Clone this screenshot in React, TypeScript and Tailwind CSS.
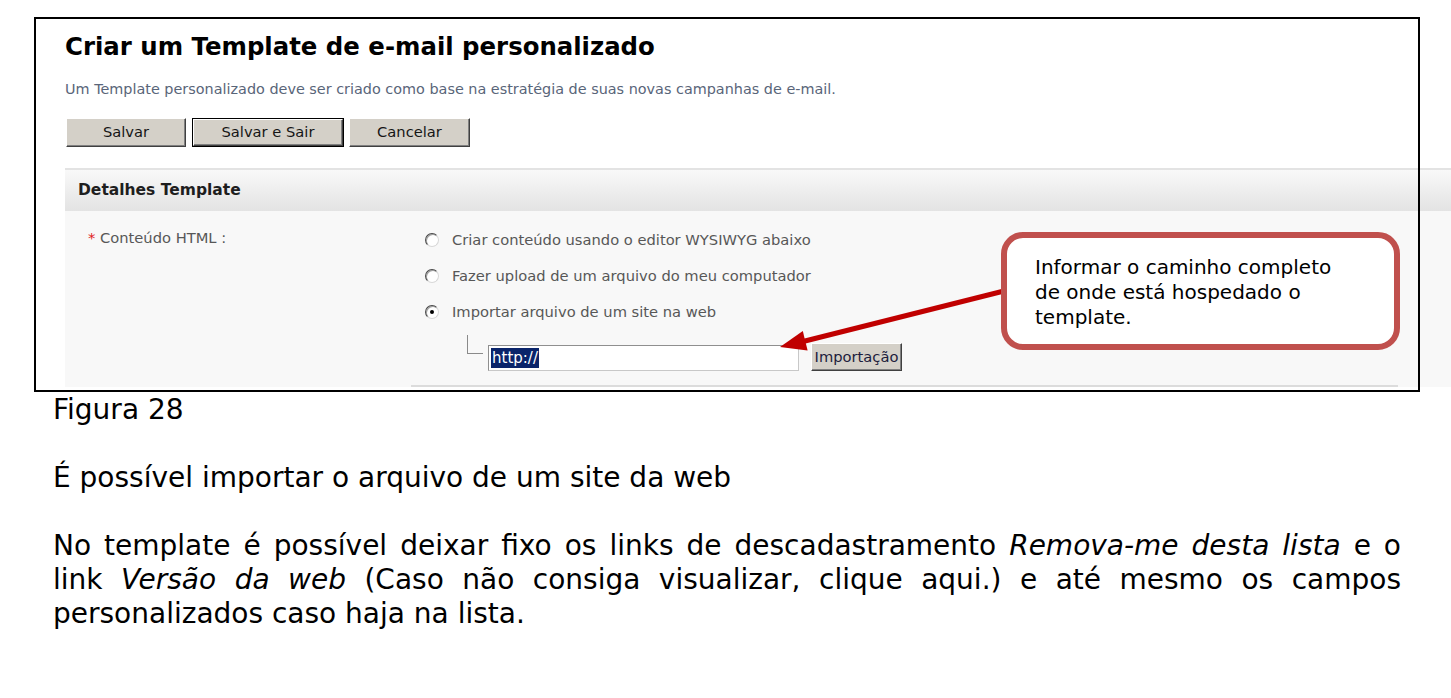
import React from "react";

function WinButton({
  children,
  className = "",
  focused = false,
}: {
  children: React.ReactNode;
  className?: string;
  focused?: boolean;
}) {
  const inner = (
    <div className="flex h-full w-full items-center justify-center border border-t-white border-l-white border-r-[#404040] border-b-[#404040] bg-[#d4d0c8] text-[#161616] shadow-[inset_-1px_-1px_0_#808080]">
      {children}
    </div>
  );
  if (focused) {
    return <div className={`border border-black ${className}`}>{inner}</div>;
  }
  return <div className={className}>{inner}</div>;
}

function Radio({ checked = false, label }: { checked?: boolean; label: string }) {
  return (
    <div className="flex h-[20px] items-center gap-[13px]">
      <span className="relative block h-[14px] w-[14px] rounded-full border-[1.5px] border-t-[#4a4a4a] border-l-[#4a4a4a] border-r-[#d8d8d8] border-b-[#d8d8d8] bg-white shadow-[inset_1px_1px_0_#a0a0a0]">
        {checked && (
          <span className="absolute left-[3.5px] top-[3.5px] block h-[4px] w-[4px] rounded-full bg-black" />
        )}
      </span>
      <span className="whitespace-nowrap text-[14.7px] leading-[20px] text-[#575757]">{label}</span>
    </div>
  );
}

export default function App() {
  return (
    <div className="relative h-[698px] w-[1451px] overflow-hidden bg-white font-['DejaVu_Sans','Verdana',sans-serif] text-black">
      {/* Figure */}
      <div className="relative ml-[34px] mt-[17px] h-[375px] w-[1417px]">
        <div className="pl-[31px] pt-[15px]">
          <h1 className="h-[30px] whitespace-nowrap text-[24.4px] font-bold leading-[30px] text-black">
            Criar um Template de e-mail personalizado
          </h1>
          <p className="mt-[18px] whitespace-nowrap text-[14.4px] leading-[18px] text-[#596579]">
            Um Template personalizado deve ser criado como base na estratégia de suas novas campanhas de e-mail.
          </p>
          <div className="ml-[1px] mt-[20px] flex h-[29px] items-stretch gap-[5px] text-[14.7px]">
            <WinButton className="w-[120px]">Salvar</WinButton>
            <WinButton focused className="ml-[1px] w-[152px]">
              Salvar e Sair
            </WinButton>
            <WinButton className="w-[121px]">Cancelar</WinButton>
          </div>
          <div className="mt-[21px] flex h-[43px] items-center border-t-2 border-[#e3e3e3] bg-gradient-to-b from-[#f9f9f9] to-[#e3e3e3] pl-[13px] text-[15.5px] font-bold text-[#1e1e1e]">
            Detalhes Template
          </div>
          <div className="flex h-[176px] flex-col bg-[#f8f8f8]">
            <div className="flex">
              <div className="w-[360px] whitespace-nowrap pl-[23px] pt-[17px] text-[14.7px] leading-[20px] text-[#575757]">
                <span className="text-[#e02020]">*</span> Conteúdo HTML :
              </div>
              <div className="flex flex-col pt-[19px]">
                <div className="flex flex-col gap-[16px]">
                  <Radio label="Criar conteúdo usando o editor WYSIWYG abaixo" />
                  <Radio label="Fazer upload de um arquivo do meu computador" />
                  <Radio checked label="Importar arquivo de um site na web" />
                </div>
                <div className="mt-[21px] flex h-[28px] items-end">
                  <div className="ml-[42px] -mt-[8px] h-[19px] w-[16px] self-start border-b border-l border-[#8a8a8a]" />
                  <div className="ml-[5px] flex h-[26px] w-[311px] items-center border border-t-[#8f8f8f] border-l-[#8f8f8f] border-r-[#c8c8c8] border-b-[#c8c8c8] bg-white pl-[2px]">
                    <span className="bg-[#0a246a] px-[1px] text-[15px] leading-[20px] text-white">http://</span>
                  </div>
                  <WinButton className="ml-[12px] h-[28px] w-[91px] text-[14.7px]">
                    <span className="text-[#1c1c3c]">Importação</span>
                  </WinButton>
                </div>
              </div>
            </div>
            <div className="ml-[346px] mt-[14px] h-[2px] w-[987px] bg-[#dcdcdc]" />
          </div>
        </div>
        <div className="pointer-events-none absolute left-0 top-0 h-[375px] w-[1386px] border-2 border-black" />
      </div>

      {/* Document text */}
      <div className="w-[1401px] pl-[53px] pt-[1px] text-[28px] leading-[34px] text-black">
        <p>Figura 28</p>
        <p className="mt-[34px]">É possível importar o arquivo de um site da web</p>
        <p className="mt-[34px] text-justify">
          No template é possível deixar fixo os links de descadastramento <em>Remova-me desta lista</em> e o link{" "}
          <em>Versão da web</em> (Caso não consiga visualizar, clique aqui.) e até mesmo os campos personalizados caso
          haja na lista.
        </p>
      </div>

      {/* Annotation arrow */}
      <svg
        className="pointer-events-none absolute left-0 top-0"
        width="1451"
        height="698"
        viewBox="0 0 1451 698"
      >
        <line x1="1004" y1="291" x2="803" y2="341.5" stroke="#c00000" strokeWidth="5" />
        <polygon points="780,347 807.6,350.4 802.8,331" fill="#c00000" />
      </svg>

      {/* Callout */}
      <div className="absolute left-[1001px] top-[232px] h-[118px] w-[399px] rounded-[22px] border-[6px] border-[#c0504d] bg-white pl-[28px] pt-[17px] text-[20px] leading-[25px] text-black">
        Informar o caminho completo
        <br />
        de onde está hospedado o
        <br />
        template.
      </div>
    </div>
  );
}
